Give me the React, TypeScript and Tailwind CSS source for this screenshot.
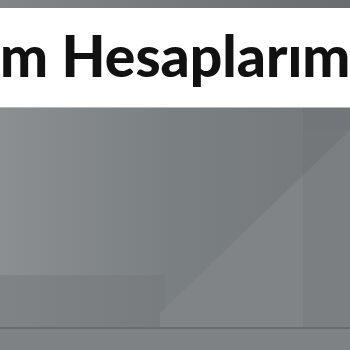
export default function App() {
  return (
    <div className="w-[350px] h-[350px] overflow-hidden flex flex-col bg-[#7a7e81]" style={{ fontFamily: 'Lato, "Open Sans", sans-serif' }}>
      <div className="h-[8px] shrink-0 bg-gradient-to-r from-[#828486] via-[#76787a] to-[#6a6c6e]" />
      <div className="h-[100px] shrink-0 bg-white flex items-center overflow-hidden border-b border-[#b8babb]">
        <span className="whitespace-nowrap text-[57px] font-black leading-none text-[#111111] tracking-[0px] pb-[5px]">
          m Hesaplarım
        </span>
      </div>
      <div className="relative flex-1 bg-gradient-to-r from-[#8b8f92] via-[#7a7f81] to-[#75797c]">
        <svg className="absolute inset-0" width="350" height="242" viewBox="0 0 350 242">
          <rect x="303" y="0" width="47" height="242" fill="#6f7376" opacity="0.55" />
          <rect x="0" y="167" width="165" height="53" fill="#74787b" opacity="0.5" />
          <polygon points="350,22 350,220 160,220 160,205" fill="#808487" />
          <rect x="303" y="22" width="47" height="198" fill="#76797c" opacity="0.45" />
          <rect x="0" y="219" width="350" height="2" fill="#6a6e71" />
          <rect x="0" y="221" width="350" height="21" fill="#7e8285" />
        </svg>
      </div>
    </div>
  );
}
